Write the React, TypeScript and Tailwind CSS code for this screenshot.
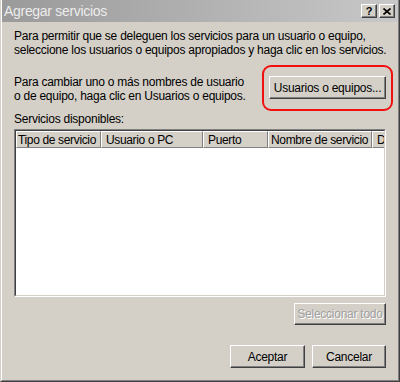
const font = { fontFamily: '"Liberation Sans", Arial, sans-serif' }

const bevel =
  'border border-t-white border-l-white border-r-[#404040] border-b-[#404040] shadow-[inset_-1px_-1px_0_#808080] bg-[#d4d0c8]'

const columns = [
  { label: 'Tipo de servicio', w: 'w-[85px]', pad: 'pl-[1px]' },
  { label: 'Usuario o PC', w: 'w-[102px]', pad: 'pl-[4px]' },
  { label: 'Puerto', w: 'w-[65px]', pad: 'pl-[4px]' },
  { label: 'Nombre de servicio', w: 'w-[104px]', pad: 'pl-[2px]' },
  { label: 'D', w: 'w-[40px]', pad: 'pl-[4px]' },
]

const App = () => {
  return (
    <div
      className="w-[400px] h-[382px] border-l border-l-[#d4d0c8] border-r border-r-[#404040] border-b border-b-[#404040] bg-[#d4d0c8]"
      style={font}
    >
      <div className="h-full border-l border-l-white border-r border-r-[#808080] border-b border-b-[#808080] flex flex-col">
        {/* Title bar */}
        <div className="h-[22px] shrink-0 flex items-center justify-between bg-gradient-to-r from-[#9a9a9a] to-[#c8c8c8] pl-[2px] pr-[3px]">
          <span className="text-[14px] tracking-[-0.3px] text-[#ececec] leading-none">Agregar servicios</span>
          <div className="flex gap-[2px]">
            <div className={`${bevel} w-[16px] h-[14px] flex items-center justify-center text-[11px] font-bold text-black leading-none`}>
              ?
            </div>
            <div className={`${bevel} w-[16px] h-[14px] flex items-center justify-center`}>
              <svg width="8" height="7" viewBox="0 0 8 7">
                <path d="M0.5 0.5 L7.5 6.5 M7.5 0.5 L0.5 6.5" stroke="#000" strokeWidth="1.6" />
              </svg>
            </div>
          </div>
        </div>

        {/* Body */}
        <div className="flex-1 flex flex-col px-[12px] pt-[7px] text-[12px] tracking-[-0.25px] leading-[14px] text-black">
          <p className="whitespace-nowrap">
            Para permitir que se deleguen los servicios para un usuario o equipo,
            <br />
            seleccione los usuarios o equipos apropiados y haga clic en los servicios.
          </p>

          <div className="mt-[18px] flex justify-between items-start">
            <p className="whitespace-nowrap">
              Para cambiar uno o más nombres de usuario
              <br />
              o de equipo, haga clic en Usuarios o equipos.
            </p>
            <div className="relative mt-[1px]">
              <button className={`${bevel} w-[117px] h-[23px] text-[12px] tracking-[-0.25px]`}>
                Usuarios o equipos...
              </button>
              <div className="absolute -left-[7px] -right-[7px] -top-[11px] -bottom-[12px] border-2 border-[#f01010] rounded-[9px] pointer-events-none" />
            </div>
          </div>

          <p className="mt-[9px]">Servicios disponibles:</p>

          {/* List view */}
          <div className="mt-[3px] h-[168px] border border-t-[#808080] border-l-[#808080] border-r-white border-b-white">
            <div className="h-full border border-t-[#404040] border-l-[#404040] border-r-[#d4d0c8] border-b-[#d4d0c8] bg-white overflow-hidden">
              <div className="flex h-[17px] whitespace-nowrap tracking-[-0.35px]">
                {columns.map((c) => (
                  <div
                    key={c.label}
                    className={`${c.w} ${c.pad} shrink-0 h-full flex items-center bg-[#d4d0c8] border-t border-l border-t-white border-l-white border-r border-b border-r-[#808080] border-b-[#808080] overflow-hidden`}
                  >
                    {c.label}
                  </div>
                ))}
              </div>
            </div>
          </div>

          <div className="mt-[6px] flex justify-end">
            <button className={`${bevel} w-[92px] h-[22px] text-[12px] tracking-[-0.25px] text-[#a0a0a0] [text-shadow:1px_1px_0_#fff]`}>
              Seleccionar todo
            </button>
          </div>

          <div className="mt-[20px] flex justify-end gap-[7px]">
            <button className={`${bevel} w-[75px] h-[23px] text-[12px] tracking-[-0.25px]`}>Aceptar</button>
            <button className={`${bevel} w-[74px] h-[23px] text-[12px] tracking-[-0.25px]`}>Cancelar</button>
          </div>
        </div>
      </div>
    </div>
  )
}

export default App
